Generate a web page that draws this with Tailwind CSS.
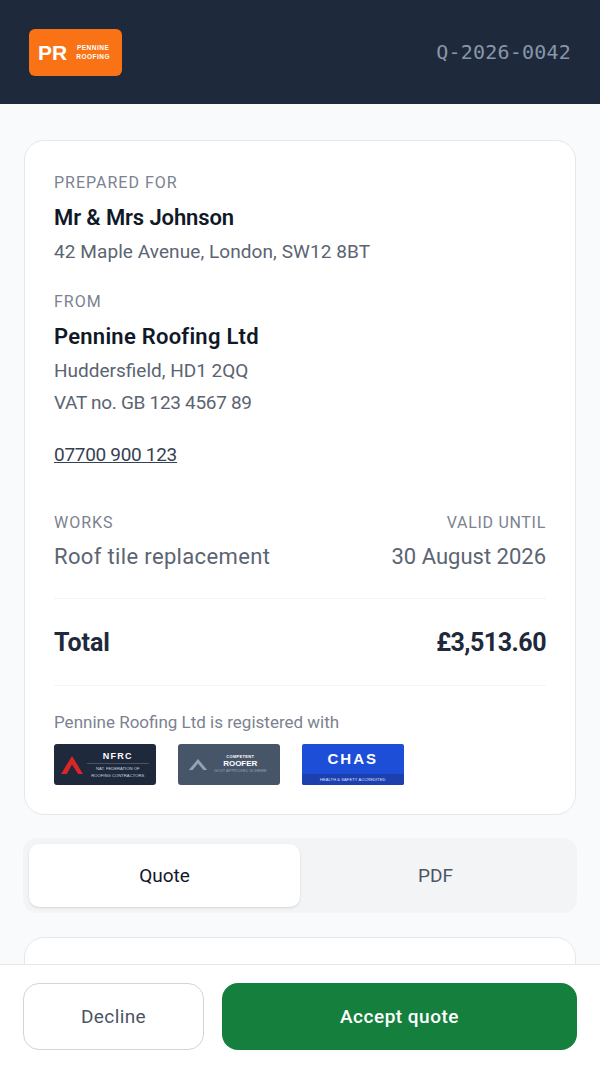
<!DOCTYPE html>
<html lang="en">
<head>
  <meta charset="UTF-8">
  <title>Quote Q-2026-0042</title>
  <script src="https://cdn.jsdelivr.net/npm/@tailwindcss/browser@4"></script>
</head>
<body class="bg-[#f8fafc] font-['Roboto',sans-serif] h-[1067px] overflow-hidden relative">

  <!-- Header -->
  <header class="bg-[#1e293b] h-[104px] pl-[29px] pr-[29px] flex justify-between items-center">
    <div class="w-[93px] h-[47px] bg-[#f97316] rounded-[6px] flex items-center pl-[9px] gap-[9px] text-white font-['Liberation_Sans',sans-serif] font-bold">
      <span class="text-[21px] leading-none">PR</span>
      <span class="text-[6.5px] leading-[9px] text-center tracking-[0.5px]">PENNINE<br>ROOFING</span>
    </div>
    <span class="font-['DejaVu_Sans_Mono',monospace] text-[#8896aa] text-[20px] tracking-[0.2px]">Q-2026-0042</span>
  </header>

  <main class="px-6 pt-9">
    <!-- Summary card -->
    <section class="bg-white border-[1.5px] border-[#e5e7eb] rounded-[20px] h-[675px] px-[29px] pt-[31px]">
      <p class="text-[#7b8290] text-[16px] leading-[22px] tracking-[1px]">PREPARED FOR</p>
      <p class="text-[#111827] text-[22px] leading-[28px] font-semibold mt-[10px] tracking-[-0.1px]">Mr &amp; Mrs Johnson</p>
      <p class="text-[#5b6472] text-[19px] leading-[26px] mt-[7px] tracking-[0.08px]">42 Maple Avenue, London, SW12 8BT</p>

      <p class="text-[#7b8290] text-[16px] leading-[22px] tracking-[1px] mt-[26px]">FROM</p>
      <p class="text-[#111827] text-[22px] leading-[28px] font-semibold mt-[10px] tracking-[0.25px]">Pennine Roofing Ltd</p>
      <p class="text-[#5b6472] text-[19px] leading-[32px] mt-[4px]">Huddersfield, HD1 2QQ</p>
      <p class="text-[#5b6472] text-[19px] leading-[32px] tracking-[-0.3px]">VAT no. GB 123 4567 89</p>
      <a href="#" class="block text-[#374151] text-[19px] leading-[26px] underline mt-[23px] tracking-[-0.3px]">07700 900 123</a>

      <div class="flex justify-between mt-[44px] pb-[27px] border-b border-[#f3f4f6]">
        <div>
          <p class="text-[#7b8290] text-[16px] leading-[22px] tracking-[1px]">WORKS</p>
          <p class="text-[#5b6472] text-[22px] leading-[28px] mt-[9px] tracking-[0.35px]">Roof tile replacement</p>
        </div>
        <div class="text-right">
          <p class="text-[#7b8290] text-[16px] leading-[22px] tracking-[0.7px]">VALID UNTIL</p>
          <p class="text-[#5b6472] text-[22px] leading-[28px] mt-[9px]">30 August 2026</p>
        </div>
      </div>

      <div class="flex justify-between items-center h-[87px] pt-[2px] border-b border-[#f3f4f6] text-[#1e293b] text-[25px] font-bold">
        <span>Total</span>
        <span class="tracking-[-0.5px]">£3,513.60</span>
      </div>

      <p class="text-[#7b8290] text-[17px] leading-[22px] mt-[25px]">Pennine Roofing Ltd is registered with</p>
      <div class="flex gap-[22.5px] mt-[11px] font-['Liberation_Sans',sans-serif] text-white">
        <div class="w-[101.5px] h-[41px] rounded-[3px] bg-[#1e293b] flex items-center pl-[7px] pr-[7px]">
          <svg width="22" height="18" viewBox="0 0 23 19"><path d="M0 19 11.5 0 23 19h-5L11.5 9 6 19z" fill="#dc2626"/></svg>
          <div class="flex-1 text-center ml-[4px]">
            <p class="text-[9px] leading-[10px] font-bold tracking-[1.2px] border-b border-white/20 pb-[2px]">NFRC</p>
            <p class="text-[4.2px] leading-[7px] mt-[1px] text-[#cbd5e1] whitespace-nowrap">NAT. FEDERATION OF<br>ROOFING CONTRACTORS</p>
          </div>
        </div>
        <div class="w-[101.5px] h-[41px] rounded-[3px] bg-[#475569] flex items-center pl-[10px] pr-[7px]">
          <svg width="20" height="11" viewBox="0 0 20 12"><path d="M0 12 10 0l10 12h-4L10 5l-6 7z" fill="#94a3b8"/></svg>
          <div class="flex-1 text-center">
            <p class="text-[4px] leading-[6px] font-bold tracking-[0.3px]">COMPETENT</p>
            <p class="text-[8px] leading-[7px] font-bold">ROOFER</p>
            <p class="text-[4px] leading-[8px] text-[#94a3b8] whitespace-nowrap">GOVT APPROVED SCHEME</p>
          </div>
        </div>
        <div class="w-[101.5px] h-[41px] rounded-[2px] bg-[#1d4ed8] flex flex-col overflow-hidden">
          <p class="flex-1 flex items-center justify-center text-[15px] font-bold tracking-[2px]">CHAS</p>
          <p class="h-[11px] bg-[#1e40af] text-[4px] leading-[11px] text-center text-[#dbeafe] tracking-[0.1px]">HEALTH &amp; SAFETY ACCREDITED</p>
        </div>
      </div>
    </section>

    <!-- Tabs -->
    <div class="bg-[#f3f4f6] rounded-[14px] h-[75px] mt-[23px] -mx-px p-[6px] grid grid-cols-2 text-[19px] font-[450]">
      <button class="bg-white rounded-[10px] text-[#111827] shadow-sm pt-[2px]">Quote</button>
      <button class="text-[#4b5563] pt-[2px]">PDF</button>
    </div>

    <!-- Next card, cut off by the action bar -->
    <section class="bg-white border-[1.5px] border-[#e5e7eb] rounded-[20px] h-[100px] mt-[24px]"></section>
  </main>

  <!-- Action bar -->
  <footer class="absolute left-0 right-0 bottom-0 h-[103px] bg-white border-t border-[#e5e7eb] px-[23px] pt-[18px] flex gap-[18px] text-[19px]">
    <button class="w-[181px] h-[67px] rounded-[16px] border-[1.5px] border-[#d1d5db] bg-white text-[#4b5563] font-[450] tracking-[0.4px] pt-[2px]">Decline</button>
    <button class="flex-1 h-[67px] rounded-[16px] bg-[#15803d] text-white font-medium tracking-[0.5px] pt-[2px]">Accept quote</button>
  </footer>
</body>
</html>
